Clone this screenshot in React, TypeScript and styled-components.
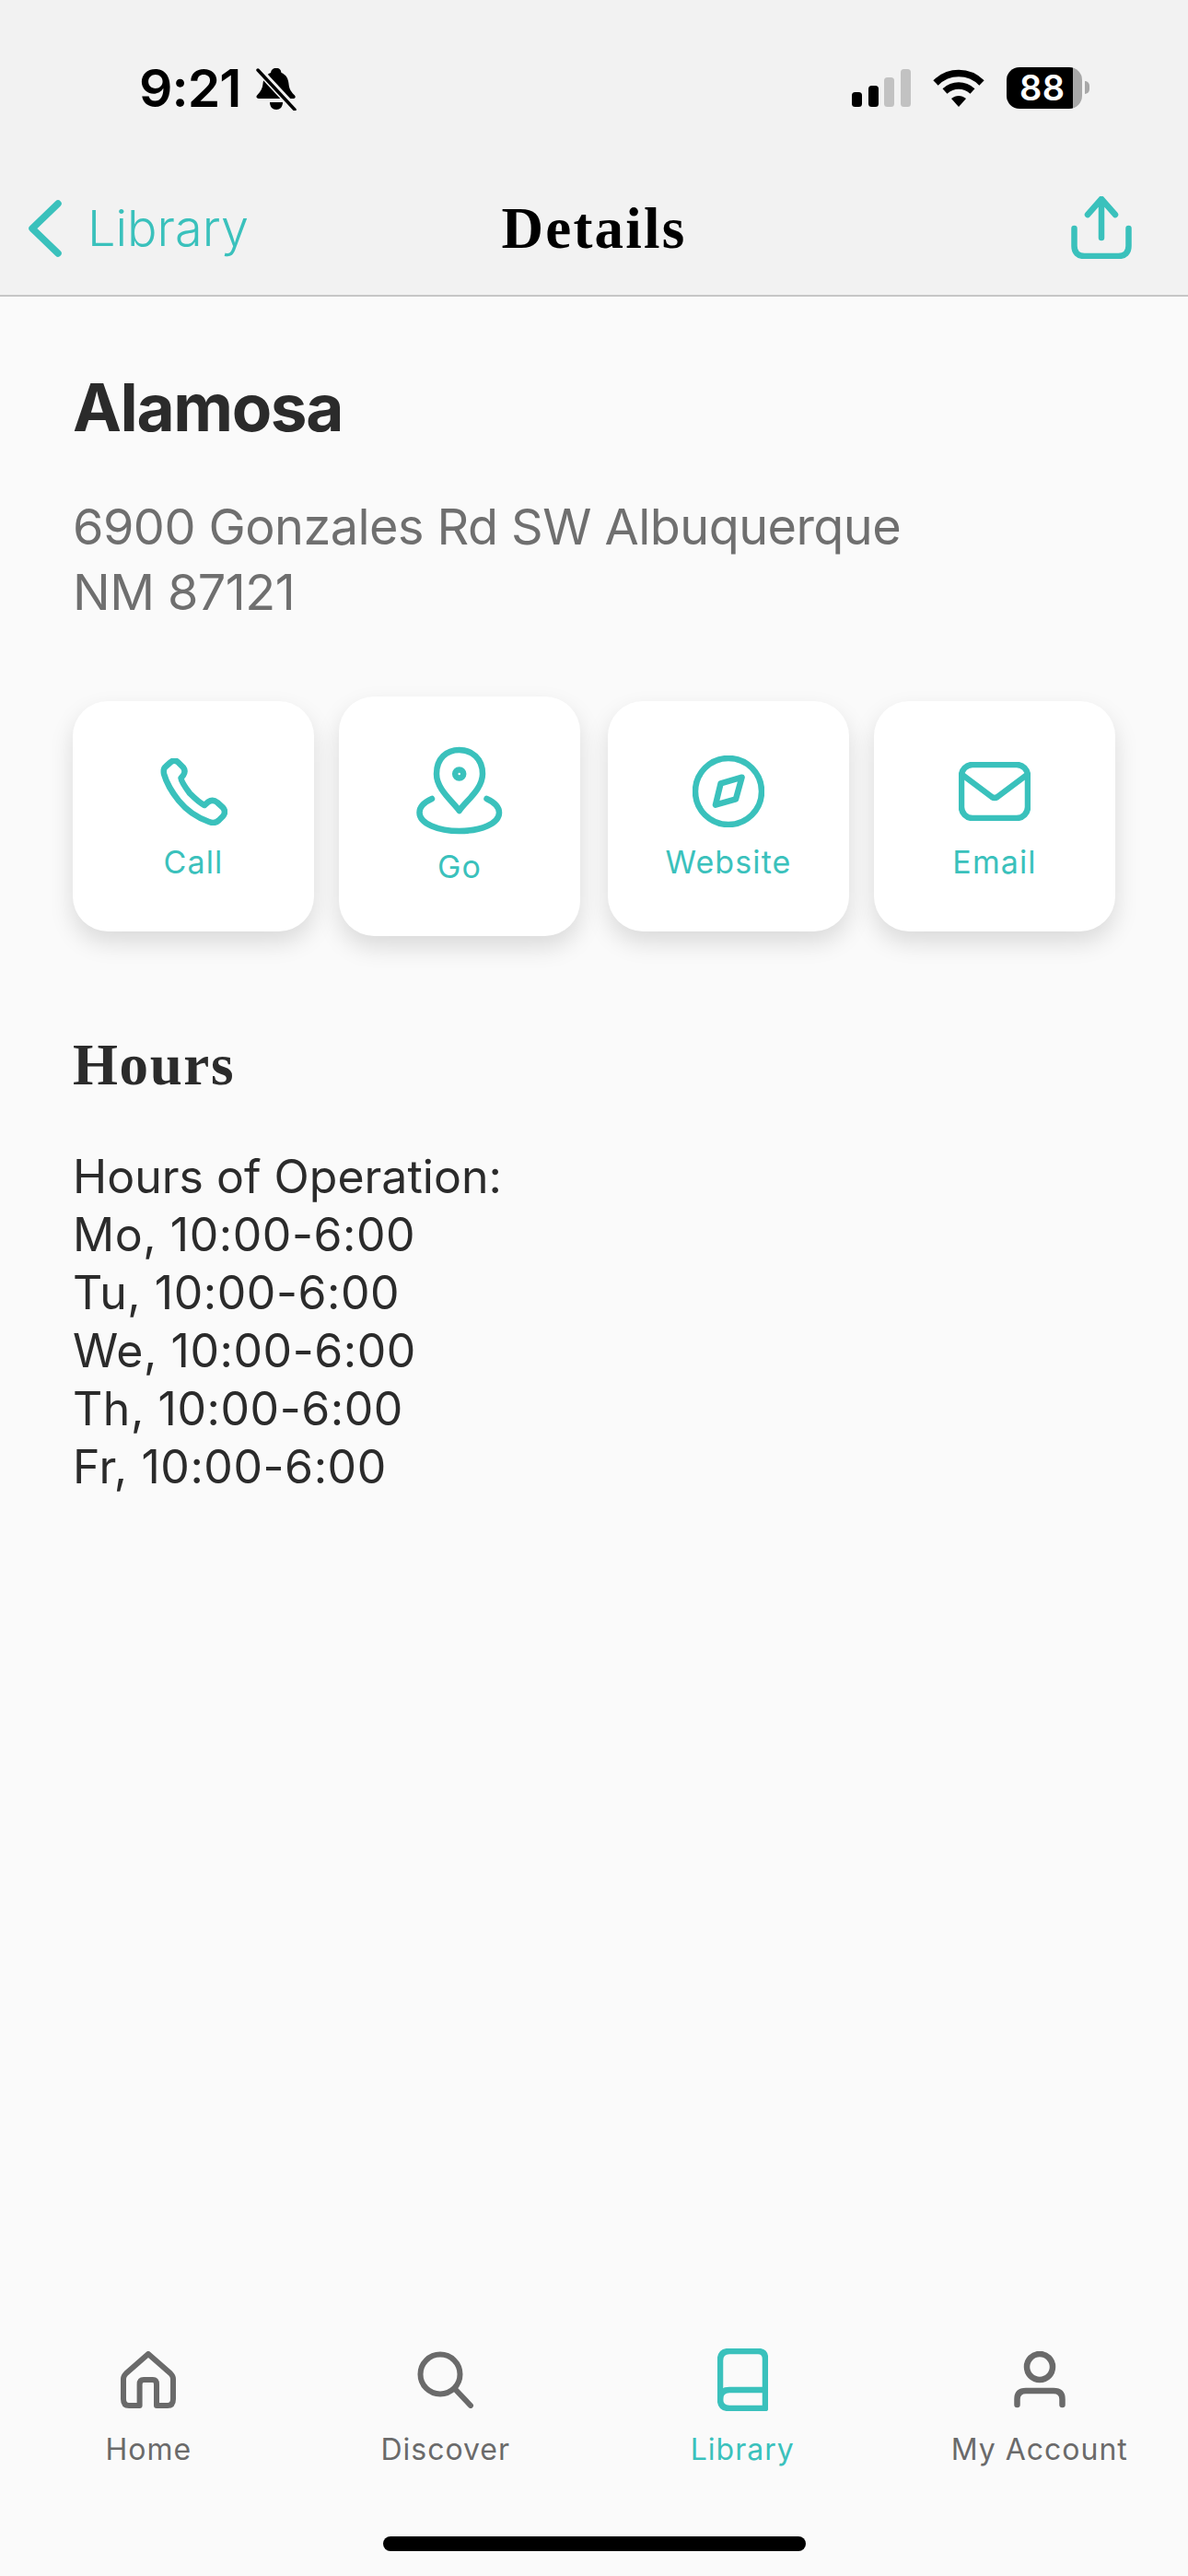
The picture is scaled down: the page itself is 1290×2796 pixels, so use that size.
import React from "react";
import styled, { createGlobalStyle } from "styled-components";

const TEAL = "#3ac1bc";
const GREY = "#6a6a6a";

const Global = createGlobalStyle`
  html, body { margin: 0; padding: 0; background: #fafafa; }
  * { box-sizing: border-box; }
`;

const Page = styled.div`
  width: 1290px;
  height: 2796px;
  display: flex;
  flex-direction: column;
  background: #fafafa;
  font-family: Inter, "Noto Sans", sans-serif;
  overflow: hidden;
`;

const Header = styled.header`
  height: 322px;
  flex: none;
  background: #f2f2f2;
  border-bottom: 2px solid #c6c6c6;
  display: flex;
  flex-direction: column;
`;

const StatusBar = styled.div`
  height: 192px;
  flex: none;
  display: flex;
  justify-content: space-between;
  padding: 73px 107px 0 151px;
`;

const StatusLeft = styled.div`
  display: flex;
  align-items: flex-start;
  gap: 17px;
  height: 46px;
`;

const Time = styled.span`
  font-size: 57px;
  font-weight: 600;
  line-height: 46px;
  color: #000;
  letter-spacing: -1px;
`;

const StatusRight = styled.div`
  display: flex;
  align-items: flex-start;
  height: 46px;
`;

const Signal = styled.svg`
  margin-top: 2px;
  margin-right: 24px;
`;

const Wifi = styled.svg`
  margin-top: 2px;
  margin-right: 24px;
`;

const Battery = styled.div`
  position: relative;
  width: 82px;
  height: 45px;
  border-radius: 14px;
  background: linear-gradient(90deg, #000 0 72px, #a8a8a8 72px);
  color: #fff;
  font-size: 38px;
  font-weight: 600;
  line-height: 45px;
  padding-left: 14px;
  letter-spacing: 0.5px;
  margin-right: 8px;
`;

const BatteryNub = styled.span`
  position: absolute;
  right: -8px;
  top: 15px;
  width: 5px;
  height: 14px;
  border-radius: 0 7px 7px 0;
  background: #a8a8a8;
`;

const NavBar = styled.div`
  flex: 1;
  display: grid;
  grid-template-columns: 1fr auto 1fr;
  align-items: start;
  padding: 21px 61px 0;
`;

const BackLink = styled.div`
  display: flex;
  align-items: center;
  gap: 28px;
  color: ${TEAL};
  font-size: 54px;
  font-weight: 300;
  line-height: 66px;
  margin: 2px 0 0 -30px;
`;

const NavTitle = styled.h1`
  margin: 0;
  font-family: "Liberation Serif", serif;
  font-weight: 700;
  font-size: 63px;
  line-height: 70px;
  letter-spacing: 2.2px;
  color: #000;
`;

const ShareSlot = styled.div`
  display: flex;
  justify-content: flex-end;
`;

const Content = styled.main`
  flex: 1;
  padding: 75px 79px 0;
  display: flex;
  flex-direction: column;
`;

const Title = styled.h2`
  margin: 0;
  font-size: 71px;
  font-weight: 700;
  line-height: 90px;
  letter-spacing: -1.4px;
  color: #2b2b2b;
`;

const Address = styled.p`
  margin: 49px 0 0;
  font-size: 54px;
  font-weight: 400;
  line-height: 71px;
  letter-spacing: -0.55px;
  color: #6f6f6f;
`;

const Actions = styled.div`
  margin-top: 78px;
  display: grid;
  grid-template-columns: repeat(4, 262px);
  column-gap: 28px;
  align-items: center;
`;

const ActionCard = styled.div<{ $tall?: boolean; $nudge?: number }>`
  height: ${(p) => (p.$tall ? 260 : 250)}px;
  padding-top: ${(p) => (p.$tall ? 54 : 58)}px;
  margin-left: ${(p) => p.$nudge ?? 0}px;
  margin-right: ${(p) => -(p.$nudge ?? 0)}px;
  border-radius: 38px;
  background: #fff;
  box-shadow: 0 12px 26px rgba(0, 0, 0, 0.13);
  display: flex;
  flex-direction: column;
  align-items: center;
  color: ${TEAL};
`;

const IconSlot = styled.div<{ $tall?: boolean }>`
  height: ${(p) => (p.$tall ? 96 : 80)}px;
  display: flex;
  align-items: center;
  justify-content: center;
`;

const ActionLabel = styled.span<{ $tall?: boolean }>`
  margin-top: ${(p) => (p.$tall ? 15 : 17)}px;
  font-size: 34px;
  line-height: 40px;
  font-weight: 400;
  letter-spacing: 1.1px;
`;

const SectionTitle = styled.h3`
  margin: 105px 0 0;
  font-family: "Liberation Serif", serif;
  font-size: 63px;
  font-weight: 700;
  line-height: 70px;
  letter-spacing: 1.6px;
  color: #2b2b2b;
`;

const HoursList = styled.div`
  margin-top: 55px;
  font-size: 50px;
  line-height: 63px;
  color: #2b2b2b;
`;

const HoursRow = styled.div`
  letter-spacing: 0.55px;
`;

const TabBar = styled.nav`
  flex: none;
  height: 247px;
  position: relative;
  display: grid;
  grid-template-columns: repeat(4, 1fr);
  align-items: start;
`;

const Tab = styled.div<{ $active?: boolean }>`
  display: flex;
  flex-direction: column;
  align-items: center;
  color: ${(p) => (p.$active ? TEAL : GREY)};
`;

const TabIconSlot = styled.div`
  height: 68px;
  display: flex;
  align-items: center;
`;

const TabLabel = styled.span`
  margin-top: 21px;
  font-size: 32px;
  line-height: 42px;
  font-weight: 400;
  letter-spacing: 1px;
`;

const HomeIndicator = styled.div`
  position: absolute;
  left: 416px;
  bottom: 27px;
  width: 459px;
  height: 16px;
  border-radius: 8px;
  background: #000;
`;

const Stroke = styled.svg`
  display: block;
  fill: none;
  stroke: currentColor;
  stroke-linecap: round;
  stroke-linejoin: round;
`;

const Chevron = styled(Stroke)`
  color: ${TEAL};
`;

const ShareIcon = styled(Stroke)`
  color: ${TEAL};
`;

const DAYS = ["Mo", "Tu", "We", "Th", "Fr"];

export default function App() {
  return (
    <Page>
      <Global />
      <Header>
        <StatusBar>
          <StatusLeft>
            <Time>9:21</Time>
            <svg width="44" height="47" viewBox="0 0 44 47">
              <path d="M22 1c4 0 5 2 5.500 5 5 2 7.500 6 8 12 .5 6 3 9 6.500 12.500 1.500 2 .5 3.500-2 3.500H3c-2.500 0-3.500-2-1.500-4C5 26 7 23 7.500 18 8 12 11 8 16 6c.5-3 2-5 6-5z" fill="#000" />
              <path d="M15 38h14c0 5-3 8-7 8s-7-3-7-8z" fill="#000" />
              <path d="M2 2l40 43" stroke="#f2f2f2" strokeWidth="8" />
              <path d="M2 3l40 43" stroke="#000" strokeWidth="3.500" strokeLinecap="round" />
            </svg>
          </StatusLeft>
          <StatusRight>
            <Signal width="64" height="42" viewBox="0 0 64 42">
              <rect x="0" y="25" width="11" height="16" rx="3.500" fill="#000" />
              <rect x="18" y="18" width="11" height="23" rx="3.500" fill="#000" />
              <rect x="35" y="9" width="11" height="32" rx="3.500" fill="#c2c2c2" />
              <rect x="53" y="0" width="11" height="41" rx="3.500" fill="#c2c2c2" />
            </Signal>
            <Wifi width="56" height="42" viewBox="0 0 56 42" fill="none">
              <path d="M3 15C17 1 39 1 53 15" stroke="#000" strokeWidth="7.500" />
              <path d="M13 24c9-8 21-8 30 0" stroke="#000" strokeWidth="7.500" />
              <path d="M20 32c5-4 11-4 16 0l-8 9z" fill="#000" />
            </Wifi>
            <Battery>
              88
              <BatteryNub />
            </Battery>
          </StatusRight>
        </StatusBar>
        <NavBar>
          <BackLink>
            <Chevron width="36" height="62" viewBox="0 0 36 62" strokeWidth="7.500">
              <path d="M32 4L4 31l28 27" />
            </Chevron>
            Library
          </BackLink>
          <NavTitle>Details</NavTitle>
          <ShareSlot>
            <ShareIcon width="66" height="68" viewBox="0 0 66 68" strokeWidth="6.500">
              <path d="M33 45V3M18 20L33 3l15 17" />
              <path d="M3.500 35v19c0 7 4 11 11 11h37c7 0 11-4 11-11V35" />
            </ShareIcon>
          </ShareSlot>
        </NavBar>
      </Header>
      <Content>
        <Title>Alamosa</Title>
        <Address>
          6900 Gonzales Rd SW Albuquerque
          <br />
          NM 87121
        </Address>
        <Actions>
          <ActionCard>
            <IconSlot>
              <Stroke width="73" height="73" viewBox="0 0 73 73" strokeWidth="6.500">
                <path d="M11 4.500Q15.500.5 19.500 4.500L25 10Q28 14 25 18.500L22.500 21.500Q23 26 32 38 42 48 48 51L52 47.500Q57 44 62 48L68 53.500Q72 58 68 63L63.500 67.500Q59 71.500 53 69 33 62 20 46 8 31 4 17 3 11 6 9Z" />
              </Stroke>
            </IconSlot>
            <ActionLabel>Call</ActionLabel>
          </ActionCard>
          <ActionCard $tall $nudge={-1}>
            <IconSlot $tall>
              <Stroke width="94" height="96" viewBox="0 0 94 96" strokeWidth="6.500">
                <path d="M46.700 70C40 60 22 47 22 30 22 13 33 4 46.700 4 60 4 72 13 72 30 72 47 53 60 46.700 70Z" />
                <circle cx="46.700" cy="30" r="4.500" />
                <path d="M17 57C8 61 3.500 66 3.500 72 3.500 84 24 92 46.700 92 70 92 90 84 90 72 90 66 85 61 76.500 57" />
              </Stroke>
            </IconSlot>
            <ActionLabel $tall>Go</ActionLabel>
          </ActionCard>
          <ActionCard $nudge={1}>
            <IconSlot>
              <Stroke width="78" height="78" viewBox="0 0 78 78" strokeWidth="6.500">
                <circle cx="39" cy="39" r="36" />
                <path d="M53.600 23.700L47 47.300 24.900 53.700 30.600 30.300Z" />
              </Stroke>
            </IconSlot>
            <ActionLabel>Website</ActionLabel>
          </ActionCard>
          <ActionCard>
            <IconSlot>
              <Stroke width="78" height="64" viewBox="0 0 78 64" strokeWidth="6.500">
                <rect x="3" y="3" width="72" height="58" rx="12" />
                <path d="M4 14L36 38Q39 40 42 38L74 14" />
              </Stroke>
            </IconSlot>
            <ActionLabel>Email</ActionLabel>
          </ActionCard>
        </Actions>
        <SectionTitle>Hours</SectionTitle>
        <HoursList>
          Hours of Operation:
          {DAYS.map((d) => (
            <HoursRow key={d}>{d}, 10:00-6:00</HoursRow>
          ))}
        </HoursList>
      </Content>
      <TabBar>
        <Tab>
          <TabIconSlot>
            <Stroke width="60" height="62" viewBox="0 0 60 62" strokeWidth="6">
              <path d="M30 3L6 24Q3 27 3 30V52Q3 59 9 59H20.600V36Q20.600 31 25 31H35Q39 31 39 36V59H51Q57 59 57 52V30Q57 27 54 24Z" />
            </Stroke>
          </TabIconSlot>
          <TabLabel>Home</TabLabel>
        </Tab>
        <Tab>
          <TabIconSlot>
            <Stroke width="62" height="62" viewBox="0 0 62 62" strokeWidth="6">
              <circle cx="25" cy="25" r="21.500" />
              <path d="M41 41L58 59" />
            </Stroke>
          </TabIconSlot>
          <TabLabel>Discover</TabLabel>
        </Tab>
        <Tab $active>
          <TabIconSlot>
            <Stroke width="55" height="68" viewBox="0 0 55 68" strokeWidth="6.500">
              <path d="M13 3H44Q52 3 52 11V65H13Q3 65 3 55V13Q3 3 13 3Z" />
              <path d="M52 45H13Q3 45 3 55" />
            </Stroke>
          </TabIconSlot>
          <TabLabel>Library</TabLabel>
        </Tab>
        <Tab>
          <TabIconSlot>
            <Stroke width="56" height="62" viewBox="0 0 56 62" strokeWidth="6.500">
              <circle cx="28" cy="17" r="14" />
              <path d="M3.500 58V52Q3.500 43 13 43H43Q52.500 43 52.500 52V58" />
            </Stroke>
          </TabIconSlot>
          <TabLabel>My Account</TabLabel>
        </Tab>
        <HomeIndicator />
      </TabBar>
    </Page>
  );
}
